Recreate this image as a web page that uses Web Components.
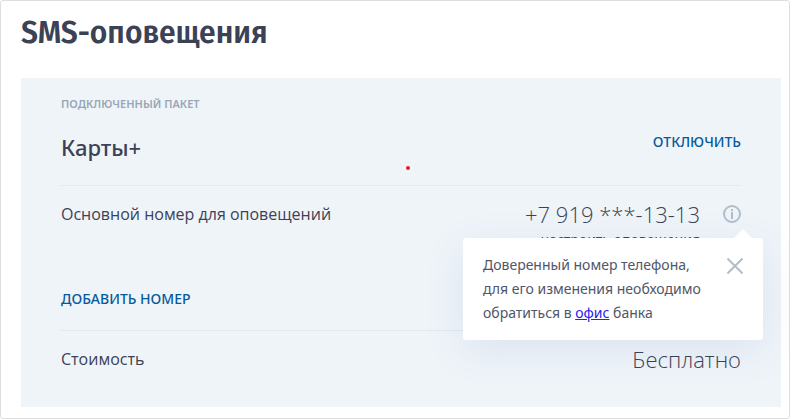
<!DOCTYPE html>
<html lang="ru">
<head>
<meta charset="utf-8">
<meta name="viewport" content="width=device-width, initial-scale=1">
<title>SMS-оповещения</title>
<style>
  * { box-sizing: border-box; }
  html { height: 100%; }
  body {
    margin: 0;
    min-height: 100%;
    display: grid;
    background: #fff;
    color: #3b4256;
    font-family: "Open Sans", "Noto Sans", sans-serif;
    --accent: #055a9b;
    --panel: #eff4f9;
    --line: #e1e8f0;
    --icon: #b0becc;
    --label-font: "Noto Sans", "Open Sans", sans-serif;
  }
  info-tip a { color: #2a22ee; }
</style>
</head>
<body>
<sms-page heading="SMS-оповещения">
  <sms-panel>
    <package-header caption="Подключенный пакет" name="Карты+">
      <action-button slot="action">Отключить</action-button>
    </package-header>
    <setting-row class="phone" label="Основной номер для оповещений">
      <phone-number slot="value" number="+7 919 ***-13-13">
        <info-tip>Доверенный номер телефона, для его изменения необходимо обратиться в <a href="#office">офис</a> банка</info-tip>
      </phone-number>
      <action-button slot="footer">Добавить номер</action-button>
    </setting-row>
    <setting-row label="Стоимость"><span slot="value">Бесплатно</span></setting-row>
  </sms-panel>
</sms-page>

<script>
class SmsPage extends HTMLElement {
  connectedCallback() {
    this.attachShadow({ mode: 'open' });
    this.shadowRoot.innerHTML = `
      <style>
        :host {
          display: block;
          box-sizing: border-box;
          padding: 12px 8px 11px 20px;
          border: 1px solid #dedede;
          border-radius: 3px;
        }
        h1 {
          margin: 0 0 25px;
          font: 600 30px/40px "Fira Sans", "Noto Sans", "Open Sans", sans-serif;
        }
      </style>
      <h1>${this.getAttribute('heading')}</h1>
      <slot></slot>
    `;
  }
}

class SmsPanel extends HTMLElement {
  connectedCallback() {
    this.attachShadow({ mode: 'open' });
    this.shadowRoot.innerHTML = `
      <style>
        :host {
          display: block;
          position: relative;
          padding: 16px 40px 32px;
          background: var(--panel);
        }
        .marker {
          position: absolute;
          top: 88px;
          left: 385px;
          width: 4px;
          height: 4px;
          border-radius: 50%;
          background: #ed1c24;
        }
      </style>
      <slot></slot>
      <span class="marker"></span>
    `;
  }
}

class PackageHeader extends HTMLElement {
  connectedCallback() {
    this.attachShadow({ mode: 'open' });
    this.shadowRoot.innerHTML = `
      <style>
        :host { display: block; padding-bottom: 22px; }
        p {
          margin: 0 0 17px;
          color: #9aa6b5;
          font: 600 11px/20px var(--label-font);
          text-transform: uppercase;
        }
        .row {
          display: flex;
          justify-content: space-between;
          align-items: flex-start;
        }
        h2 {
          margin: 0;
          font: 500 22px/32px var(--label-font);
        }
        slot { display: block; padding-top: 1px; }
      </style>
      <p>${this.getAttribute('caption')}</p>
      <div class="row">
        <h2>${this.getAttribute('name')}</h2>
        <slot name="action"></slot>
      </div>
    `;
  }
}

class ActionButton extends HTMLElement {
  connectedCallback() {
    this.attachShadow({ mode: 'open' });
    this.shadowRoot.innerHTML = `
      <style>
        :host { display: block; }
        button {
          display: block;
          padding: 0;
          border: 0;
          background: none;
          color: var(--accent);
          font: 500 14px/20px var(--label-font);
          text-transform: uppercase;
          cursor: pointer;
        }
      </style>
      <button type="button"><slot></slot></button>
    `;
  }
}

class SettingRow extends HTMLElement {
  connectedCallback() {
    this.attachShadow({ mode: 'open' });
    this.shadowRoot.innerHTML = `
      <style>
        :host {
          display: block;
          padding-top: 12px;
          border-top: 1px solid var(--line);
        }
        :host(.phone) { padding-bottom: 21px; }
        .row {
          display: flex;
          justify-content: space-between;
          align-items: flex-start;
          line-height: 32px;
        }
        .label { font-size: 16px; }
        .value {
          font-size: 22px;
          font-weight: 300;
          text-align: right;
        }
        :host(.phone) slot[name="footer"] {
          display: block;
          padding-top: 39px;
        }
      </style>
      <div class="row">
        <span class="label">${this.getAttribute('label')}</span>
        <div class="value"><slot name="value"></slot></div>
      </div>
      <slot name="footer"></slot>
    `;
  }
}

class PhoneNumber extends HTMLElement {
  connectedCallback() {
    this.attachShadow({ mode: 'open' });
    this.shadowRoot.innerHTML = `
      <style>
        :host {
          display: flex;
          align-items: flex-start;
          gap: 23px;
        }
        .number { display: block; }
        a {
          display: block;
          color: var(--accent);
          font: 400 14px/20px var(--label-font);
          text-decoration: none;
        }
      </style>
      <div>
        <span class="number">${this.getAttribute('number')}</span>
        <a href="#settings">настроить оповещения</a>
      </div>
      <slot></slot>
    `;
  }
}

class InfoTip extends HTMLElement {
  connectedCallback() {
    this.attachShadow({ mode: 'open' });
    this.shadowRoot.innerHTML = `
      <style>
        :host {
          display: block;
          position: relative;
          margin-top: 7px;
          color: #505668;
          font: 400 14px/24px var(--label-font);
          text-align: left;
        }
        button {
          display: block;
          flex: none;
          padding: 0;
          border: 0;
          background: none;
          color: var(--icon);
          cursor: pointer;
        }
        svg { display: block; }
        .tip {
          position: absolute;
          top: 33px;
          right: -22px;
          z-index: 1;
          box-sizing: border-box;
          width: 300px;
          display: flex;
          align-items: flex-start;
          justify-content: space-between;
          padding: 15px 20px;
          border-radius: 3px;
          background: #fff;
          box-shadow: 0 10px 40px rgba(60, 90, 160, 0.1);
        }
        .tip::before {
          content: '';
          position: absolute;
          top: -9px;
          right: 11px;
          border: 9px solid transparent;
          border-top: 0;
          border-bottom-color: #fff;
        }
        .text { width: 232px; }
        .close { margin-top: 5px; }
      </style>
      <button type="button" aria-label="Подробнее">
        <svg width="18" height="18" viewBox="0 0 18 18" fill="none" stroke="currentColor" stroke-width="2">
          <circle cx="9" cy="9" r="8"/>
          <path d="M9 4v2M9 7v7"/>
        </svg>
      </button>
      <div class="tip" role="tooltip">
        <div class="text"><slot></slot></div>
        <button class="close" type="button" aria-label="Закрыть">
          <svg width="16" height="16" viewBox="0 0 16 16" fill="none" stroke="currentColor" stroke-width="2">
            <path d="M0.5 0.5l15 15M15.5 0.5l-15 15"/>
          </svg>
        </button>
      </div>
    `;
  }
}

customElements.define('sms-page', SmsPage);
customElements.define('sms-panel', SmsPanel);
customElements.define('package-header', PackageHeader);
customElements.define('action-button', ActionButton);
customElements.define('setting-row', SettingRow);
customElements.define('phone-number', PhoneNumber);
customElements.define('info-tip', InfoTip);
</script>
</body>
</html>
